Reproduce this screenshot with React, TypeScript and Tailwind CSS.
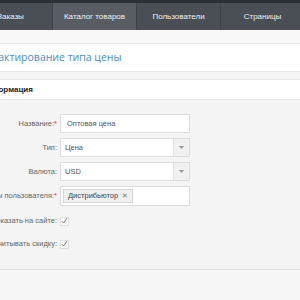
import React from "react";

const font = { fontFamily: '"Liberation Sans", Arial, sans-serif' };
const titleFont = { fontFamily: '"Open Sans", "Liberation Sans", sans-serif' };

function Arrow() {
  return (
    <div className="w-[16px] self-stretch bg-[#f0f0f0] border-l border-[#e2e2e2] flex items-center justify-center">
      <svg width="5" height="3" viewBox="0 0 5 3"><path d="M0 0h5L2.5 3z" fill="#999" /></svg>
    </div>
  );
}

function Check() {
  return (
    <div className="w-[9px] h-[9px] border border-[#e0e0e0] bg-[#fafafa] flex items-center justify-center">
      <svg width="8" height="8" viewBox="0 0 8 8"><path d="M1.3 4.3 L3 6.2 L6.8 0.8" stroke="#666" strokeWidth="1" fill="none" /></svg>
    </div>
  );
}

export default function App() {
  const tabs = ["Заказы", "Каталог товаров", "Пользователи", "Страницы"];
  return (
    <div className="w-[300px] h-[300px] overflow-hidden bg-[#f5f5f5]" style={font}>
      <div className="h-[3px] bg-[#2c3035]" />
      <div className="h-[27px] bg-[#4a4f55] flex ml-[-31px]">
        {tabs.map((t, i) => (
          <div
            key={t}
            className={`w-[84px] shrink-0 flex items-center justify-center text-[8px] text-[#eef0f1] border-r border-[#3f4348] ${i === 1 ? "bg-[#585d63]" : ""}`}
          >
            {t}
          </div>
        ))}
      </div>
      <div className="h-[14px] bg-[#f8f8f8] border-b border-[#e6e6e6]" />
      <div className="h-[28px] bg-white border-b border-[#e6e6e6] flex items-center ml-[-20px]" style={titleFont}>
        <span className="text-[10.5px] text-[#4a8fc2] leading-none">Редактирование типа цены</span>
      </div>
      <div className="h-[7px] bg-[#f5f5f5]" />
      <div className="bg-white border-t border-[#e8e8e8] h-[21px] flex items-center ml-[-19px] border-b">
        <span className="text-[8px] font-bold text-[#222]">Информация</span>
      </div>
      <div className="bg-[#f4f4f4] border-b border-[#dedede] h-[170px] pt-[14px] ml-[-57px] flex flex-col gap-[5px] text-[7.5px] text-[#666]">
        <div className="flex items-center h-[19px]">
          <div className="w-[117px] text-right pr-[3px]">Название:<span className="text-[#d33]">*</span></div>
          <div className="w-[130px] h-[19px] bg-white border border-[#dcdcdc] flex items-center px-[6px] text-[#555]">Оптовая цена</div>
        </div>
        <div className="flex items-center h-[19px]">
          <div className="w-[117px] text-right pr-[3px]">Тип:</div>
          <div className="w-[130px] h-[19px] bg-white border border-[#dcdcdc] flex items-center text-[#555]">
            <span className="flex-1 px-[4px]">Цена</span>
            <Arrow />
          </div>
        </div>
        <div className="flex items-center h-[19px]">
          <div className="w-[117px] text-right pr-[3px]">Валюта:</div>
          <div className="w-[130px] h-[19px] bg-white border border-[#dcdcdc] flex items-center text-[#555]">
            <span className="flex-1 px-[4px]">USD</span>
            <Arrow />
          </div>
        </div>
        <div className="flex items-center h-[20px]">
          <div className="w-[117px] text-right pr-[3px]">Группы пользователя:<span className="text-[#d33]">*</span></div>
          <div className="w-[130px] h-[20px] bg-white border border-[#dcdcdc] flex items-center px-[2px]">
            <div className="h-[14px] bg-[#f0f0f0] border border-[#d6d6d6] flex items-center gap-[4px] px-[4px] text-[7.5px] text-[#444]">
              Дистрибьютор <span className="text-[#777] text-[7px]">✕</span>
            </div>
          </div>
        </div>
        <div className="flex items-center h-[18px] mt-[1px]">
          <div className="w-[117px] text-right pr-[3px]">Показать на сайте:</div>
          <Check />
        </div>
        <div className="flex items-center h-[18px]">
          <div className="w-[117px] text-right pr-[3px]">Учитывать скидку:</div>
          <Check />
        </div>
      </div>
    </div>
  );
}
